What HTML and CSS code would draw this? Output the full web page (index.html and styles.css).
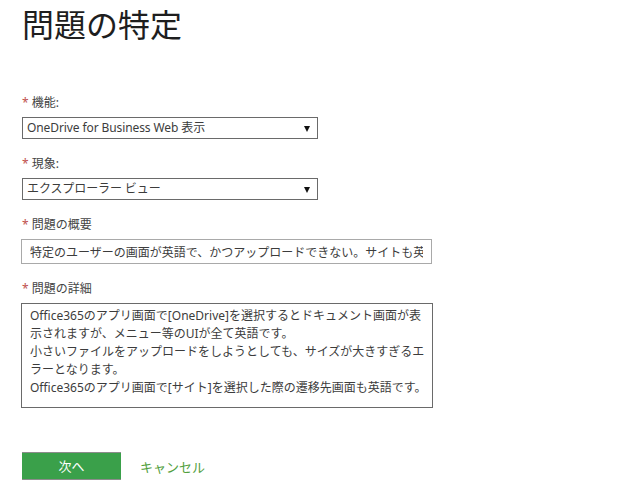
FILE: index.html
```html
<!DOCTYPE html>
<html lang="ja">
<head>
<meta charset="utf-8">
<title>問題の特定</title>
<link rel="stylesheet" href="styles.css">
</head>
<body>
<main class="page">
  <h1 class="title">問題の特定</h1>

  <div class="field">
    <label class="label"><span class="req">*</span> 機能:</label>
    <div class="select-wrap">
      <select class="select">
        <option>OneDrive for Business Web 表示</option>
      </select>
    </div>
  </div>

  <div class="field">
    <label class="label"><span class="req">*</span> 現象:</label>
    <div class="select-wrap">
      <select class="select">
        <option>エクスプローラー ビュー</option>
      </select>
    </div>
  </div>

  <div class="field">
    <label class="label"><span class="req">*</span> 問題の概要</label>
    <input class="input" type="text" value="特定のユーザーの画面が英語で、かつアップロードできない。サイトも英語です。">
  </div>

  <div class="field">
    <label class="label"><span class="req">*</span> 問題の詳細</label>
    <textarea class="textarea">Office365のアプリ画面で[OneDrive]を選択するとドキュメント画面が表
示されますが、メニュー等のUIが全て英語です。
小さいファイルをアップロードをしようとしても、サイズが大きすぎるエ
ラーとなります。
Office365のアプリ画面で[サイト]を選択した際の遷移先画面も英語です。</textarea>
  </div>

  <div class="actions">
    <button class="btn-next" type="button">次へ</button>
    <a class="cancel" href="#">キャンセル</a>
  </div>
</main>
</body>
</html>
```

FILE: styles.css
```css
html, body {
  margin: 0;
  padding: 0;
  background: #ffffff;
}

body {
  font-family: "Noto Sans", "Noto Sans CJK JP", sans-serif;
  color: #3c3c3c;
}

.page {
  display: flex;
  flex-direction: column;
  align-items: flex-start;
  padding: 0 0 0 22px;
}

.title {
  margin: 3px 0 52px 0;
  font-family: "Noto Sans CJK JP", sans-serif;
  font-size: 32px;
  line-height: 40px;
  font-weight: 400;
  color: #1e1e1e;
  letter-spacing: 0;
}

.field {
  display: flex;
  flex-direction: column;
  align-items: flex-start;
  margin-bottom: 17px;
}

.label {
  display: block;
  font-size: 12px;
  line-height: 16px;
  height: 16px;
  margin-bottom: 6px;
  color: #444444;
}

.req {
  color: #c0504d;
}

.select-wrap {
  position: relative;
  width: 296px;
}

.select-wrap::after {
  content: "";
  position: absolute;
  right: 8px;
  top: 9px;
  width: 0;
  height: 0;
  border-left: 3px solid transparent;
  border-right: 3px solid transparent;
  border-top: 6px solid #111111;
  pointer-events: none;
}

.select {
  -webkit-appearance: none;
  appearance: none;
  display: block;
  box-sizing: border-box;
  width: 296px;
  height: 22px;
  margin: 0;
  padding: 0 20px 0 4px;
  border: 1px solid #6a6a6a;
  border-radius: 0;
  background: #ffffff;
  font-family: "Noto Sans", "Noto Sans CJK JP", sans-serif;
  font-size: 12px;
  letter-spacing: -0.1px;
  line-height: 20px;
  color: #3c3c3c;
}

.input {
  display: block;
  box-sizing: border-box;
  width: 411px;
  height: 25px;
  margin: 0 0 0 -1px;
  padding: 0 8px;
  border: 1px solid #a9a9a9;
  border-radius: 0;
  font-family: "Noto Sans", "Noto Sans CJK JP", sans-serif;
  font-size: 12px;
  color: #3c3c3c;
  outline: none;
}

.textarea {
  display: block;
  box-sizing: border-box;
  width: 412px;
  height: 105px;
  margin: 0 0 0 -1px;
  padding: 3px 2px 0 8px;
  border: 1px solid #6a6a6a;
  border-radius: 0;
  font-family: "Noto Sans", "Noto Sans CJK JP", sans-serif;
  font-size: 12px;
  line-height: 18px;
  color: #3c3c3c;
  resize: none;
  overflow: hidden;
  white-space: pre-wrap;
  outline: none;
}

.actions {
  display: flex;
  align-items: center;
  gap: 19px;
  margin-top: 26px;
}

.btn-next {
  box-sizing: border-box;
  width: 99px;
  height: 28px;
  margin: 0;
  padding: 0;
  border: none;
  border-top: 1px solid #8c8c8c;
  border-bottom: 1px solid #8c8c8c;
  background: #3aa04a;
  color: #ffffff;
  font-family: "Noto Sans CJK JP", sans-serif;
  font-size: 13px;
  line-height: 26px;
  cursor: pointer;
}

.cancel {
  font-family: "Noto Sans CJK JP", sans-serif;
  font-size: 13px;
  line-height: 28px;
  color: #52a03e;
  text-decoration: none;
  padding-top: 2px;
}
```
